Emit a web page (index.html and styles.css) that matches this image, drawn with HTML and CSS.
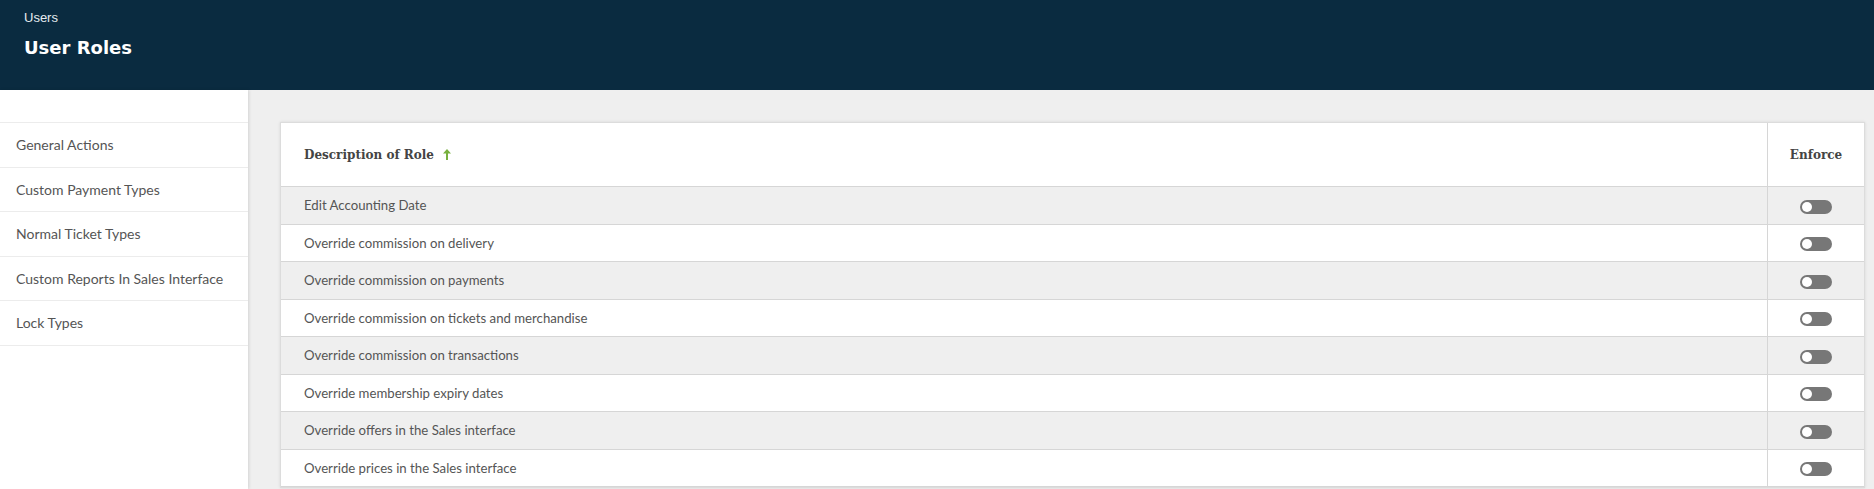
FILE: index.html
```html
<!DOCTYPE html>
<html lang="en">

<head>
    <meta charset="UTF-8">
    <meta name="viewport" content="width=device-width, initial-scale=1.0">
    <title>User Roles</title>
    <link rel="stylesheet" href="styles.css">
</head>

<body>
    <header class="page-header">
        <div class="crumb">Users</div>
        <h1>User Roles</h1>
    </header>

    <div class="layout">
        <nav class="side-nav">
            <ul>
                <li>General Actions</li>
                <li>Custom Payment Types</li>
                <li>Normal Ticket Types</li>
                <li>Custom Reports In Sales Interface</li>
                <li>Lock Types</li>
            </ul>
        </nav>

        <main class="content">
            <div class="card">
                <table class="roles-table">
                    <thead>
                        <tr>
                            <th class="col-desc">Description of Role
                                <svg class="sort-arrow" width="8" height="11" viewBox="0 0 8 11">
                                    <path d="M4 0 L8 4.5 H5 V11 H3 V4.5 H0 Z" fill="#78b13f" />
                                </svg>
                            </th>
                            <th class="col-enforce">Enforce</th>
                        </tr>
                    </thead>
                    <tbody>
                        <tr>
                            <td>Edit Accounting Date</td>
                            <td class="toggle-cell"><span class="toggle"></span></td>
                        </tr>
                        <tr>
                            <td>Override commission on delivery</td>
                            <td class="toggle-cell"><span class="toggle"></span></td>
                        </tr>
                        <tr>
                            <td>Override commission on payments</td>
                            <td class="toggle-cell"><span class="toggle"></span></td>
                        </tr>
                        <tr>
                            <td>Override commission on tickets and merchandise</td>
                            <td class="toggle-cell"><span class="toggle"></span></td>
                        </tr>
                        <tr>
                            <td>Override commission on transactions</td>
                            <td class="toggle-cell"><span class="toggle"></span></td>
                        </tr>
                        <tr>
                            <td>Override membership expiry dates</td>
                            <td class="toggle-cell"><span class="toggle"></span></td>
                        </tr>
                        <tr>
                            <td>Override offers in the Sales interface</td>
                            <td class="toggle-cell"><span class="toggle"></span></td>
                        </tr>
                        <tr>
                            <td>Override prices in the Sales interface</td>
                            <td class="toggle-cell"><span class="toggle"></span></td>
                        </tr>
                    </tbody>
                </table>
            </div>
        </main>
    </div>
</body>

</html>
```

FILE: styles.css
```css
body {
    font-family: Lato, 'Open Sans', sans-serif;
    margin: 0;
    padding: 0;
    background-color: #efefef;
    color: #555;
    overflow: hidden;
}

.page-header {
    background-color: #0a2b40;
    color: #fff;
    height: 90px;
    box-sizing: border-box;
    padding: 10px 24px 0;
}

.crumb {
    font-family: 'Liberation Sans', Arial, sans-serif;
    font-size: 13px;
    color: #e6ecf0;
    line-height: 16px;
}

.page-header h1 {
    font-family: 'DejaVu Sans', Verdana, sans-serif;
    font-size: 18px;
    font-weight: bold;
    margin: 11px 0 0;
    line-height: 22px;
}

.layout {
    display: flex;
    height: 399px;
}

.side-nav {
    width: 248px;
    flex-shrink: 0;
    background-color: #fff;
    box-shadow: 1px 0 3px rgba(0, 0, 0, 0.12);
    padding-top: 32px;
    position: relative;
    z-index: 1;
}

.side-nav ul {
    list-style: none;
    margin: 0;
    padding: 0;
    border-top: 1px solid #ececec;
}

.side-nav li {
    height: 43.5px;
    line-height: 44px;
    padding-left: 16px;
    font-size: 14px;
    color: #555;
    border-bottom: 1px solid #ececec;
}

.content {
    flex: 1;
    padding: 32px 9px 0 32px;
    overflow: hidden;
}

.card {
    background-color: #fff;
    border: 1px solid #dcdcdc;
    box-shadow: 0 0 3px rgba(0, 0, 0, 0.1);
}

.roles-table {
    width: 100%;
    border-collapse: collapse;
}

.roles-table th {
    font-family: 'DejaVu Serif', 'Liberation Serif', serif;
    font-size: 12px;
    font-weight: bold;
    color: #444;
    height: 61px;
    border-bottom: 1px solid #d6d6d6;
}

.col-desc {
    text-align: left;
    padding-left: 23px;
}

.col-enforce {
    width: 94px;
    text-align: center;
    border-left: 1px solid #d6d6d6;
}

.sort-arrow {
    margin-left: 5px;
    vertical-align: -1px;
}

.roles-table td {
    height: 36.5px;
    padding: 0 0 0 23px;
    font-size: 13.2px;
    color: #555;
    border-bottom: 1px solid #d6d6d6;
}

.roles-table tbody tr:nth-child(odd) {
    background-color: #efefef;
}

.roles-table td.toggle-cell {
    padding: 0;
    text-align: center;
    border-left: 1px solid #d6d6d6;
}

.toggle {
    display: inline-block;
    width: 32px;
    height: 14px;
    border-radius: 7px;
    background-color: #777;
    position: relative;
    vertical-align: middle;
}

.toggle::after {
    content: "";
    position: absolute;
    left: 2px;
    top: 2px;
    width: 10px;
    height: 10px;
    border-radius: 50%;
    background-color: #fff;
}
```
